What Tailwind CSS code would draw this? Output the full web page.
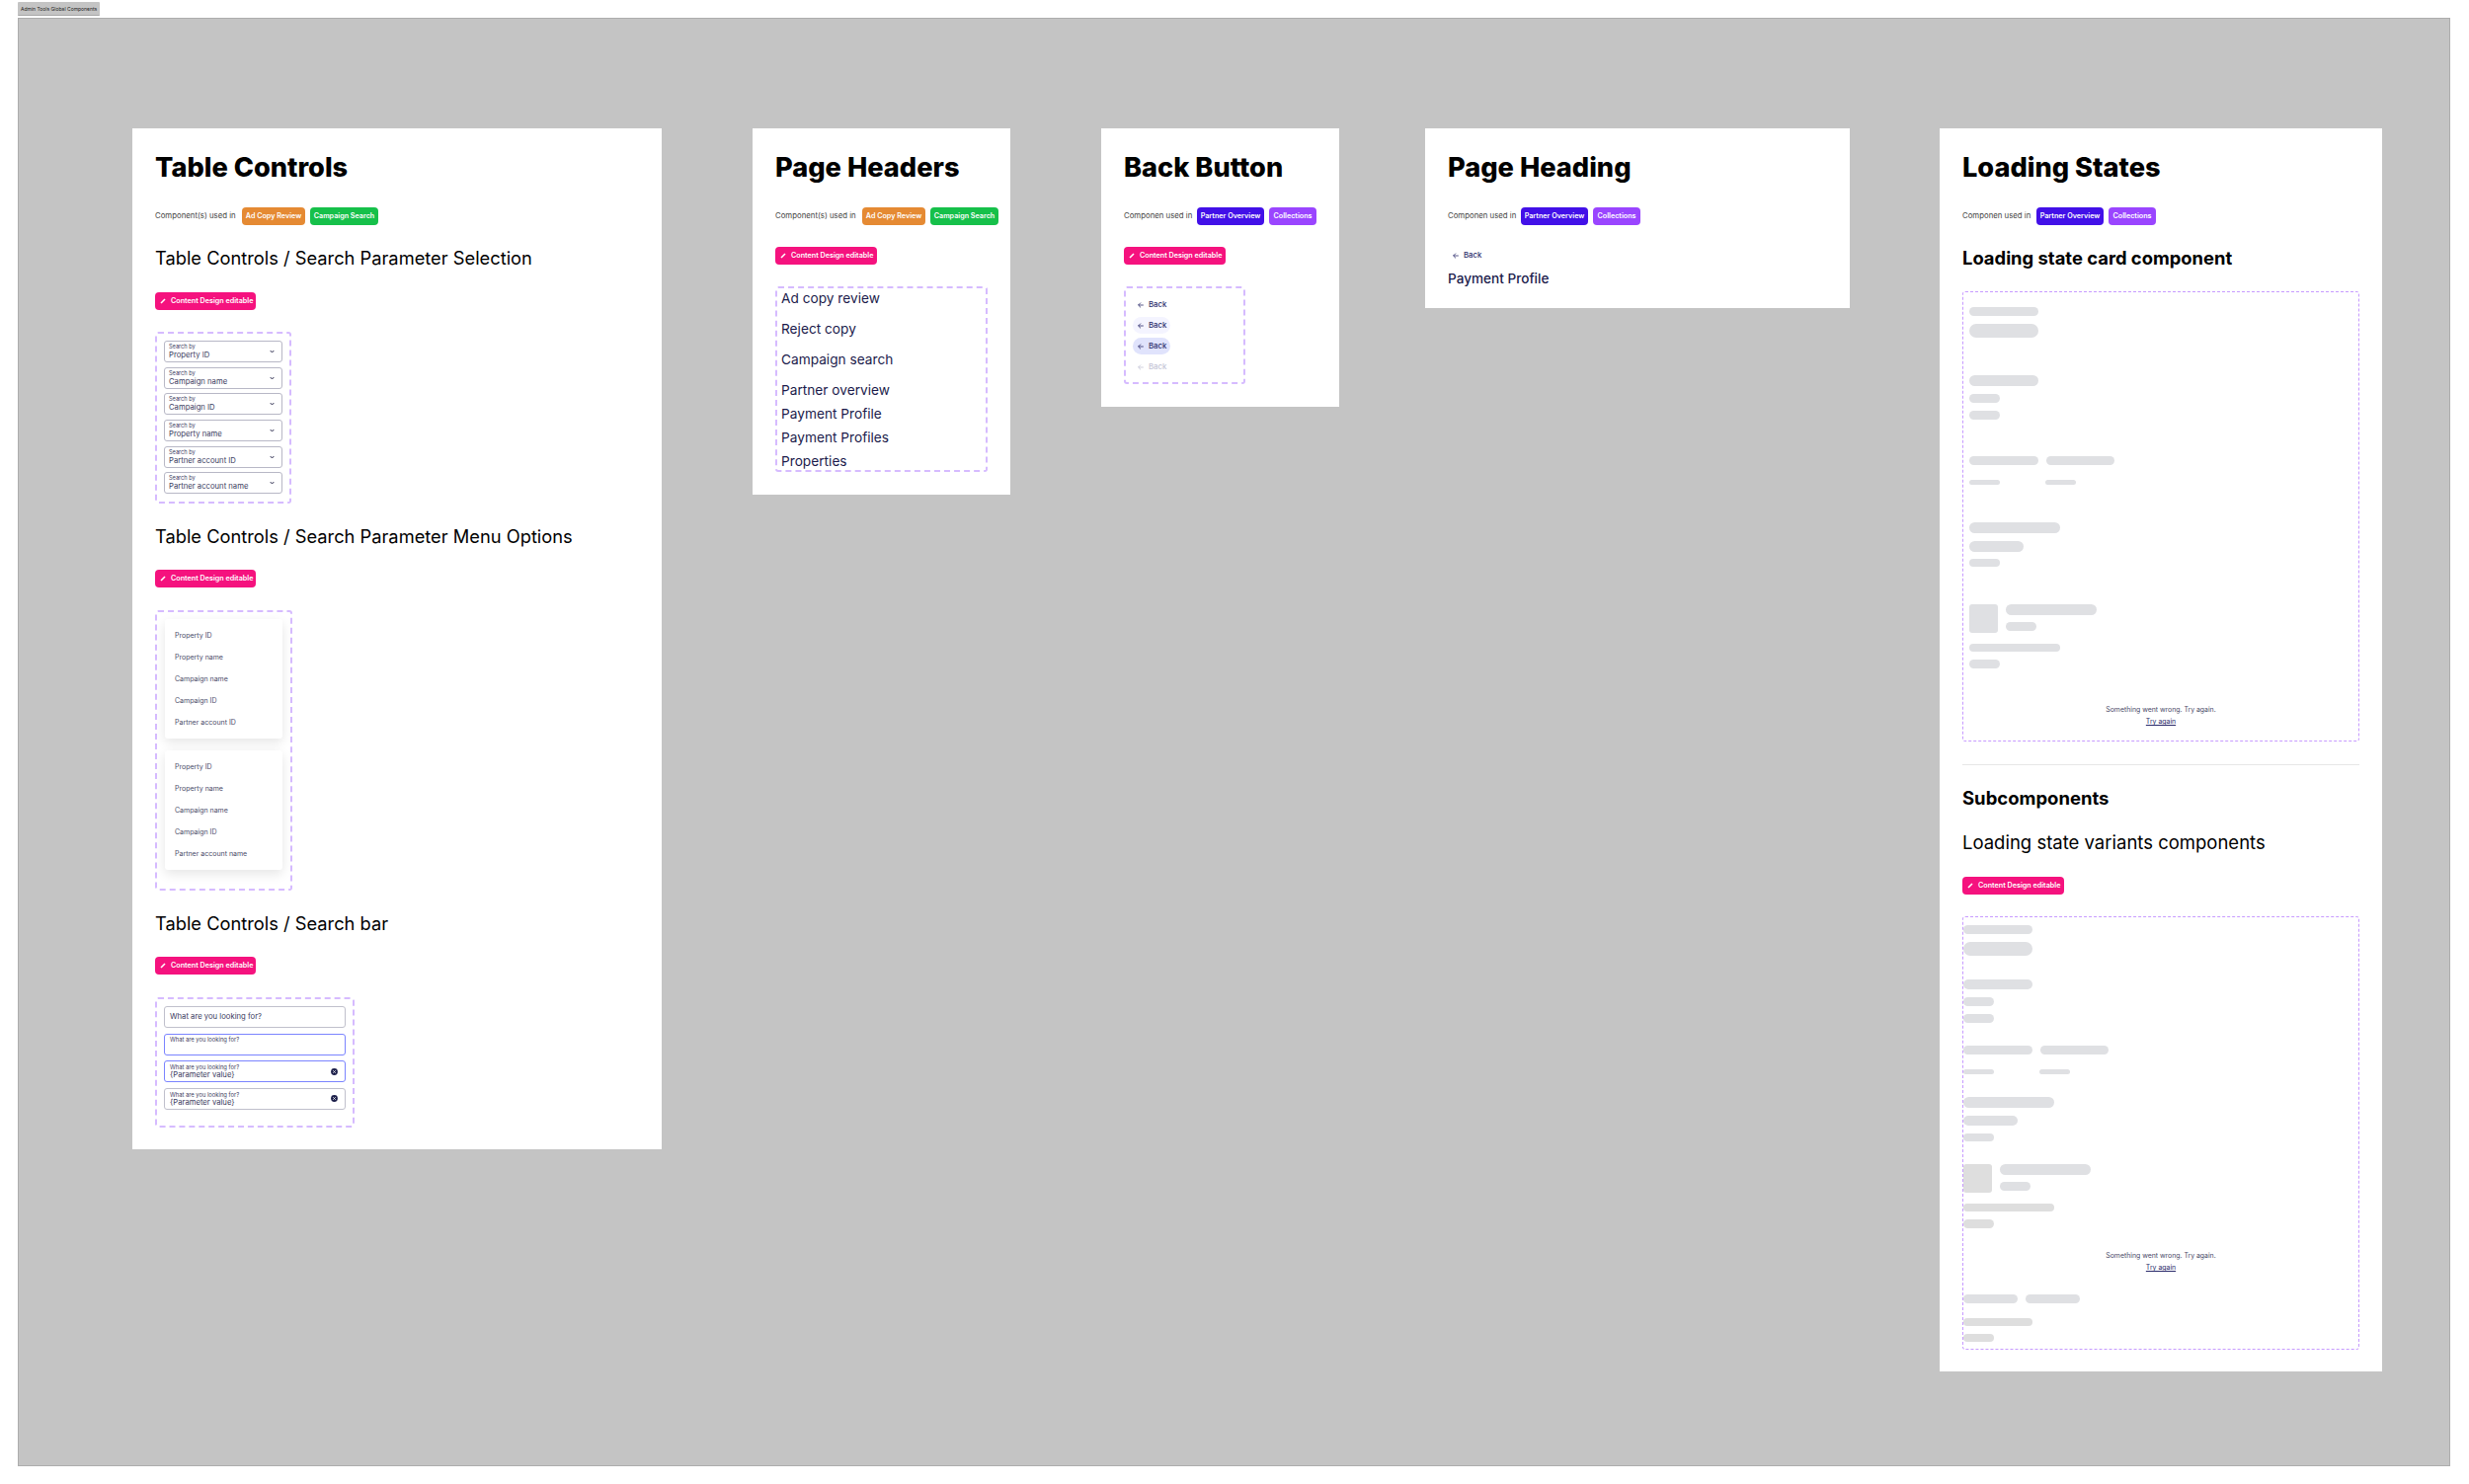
<!doctype html>
<html>
<head>
<meta charset="utf-8">
<script src="https://cdn.jsdelivr.net/npm/@tailwindcss/browser@4"></script>
</head>
<body class="bg-white font-['Inter',sans-serif]">
<div class="w-[2500px] h-[1503px] relative overflow-hidden">
  <div class="h-[18px] pl-[18px] pt-[2px]"><div class="w-[83px] h-[14px] bg-[#c4c4c4] border-b border-[#a8a8a8] rounded-[1px] text-[5px] leading-[14px] pl-[3px] text-[#222] whitespace-nowrap">Admin Tools Global Components</div></div>
  <div class="ml-[18px] w-[2463px] h-[1467px] bg-[#c4c4c4] border border-[#adadad] pt-[111px] pl-[115px] flex items-start">

    <!-- Table Controls -->
    <section class="w-[536px] h-[1034px] bg-white shrink-0 pt-5 px-[23px] flex flex-col items-start">
      <h1 class="h-10 leading-10 text-[27.2px] font-extrabold text-black whitespace-nowrap">Table Controls</h1>
      <div class="mt-5 h-[18px] flex items-center text-[7.2px] font-semibold text-white">
        <span class="w-[88px] text-[7.8px] font-normal text-[#444] whitespace-nowrap">Component(s) used in</span>
        <span class="w-[64px] h-[18px] rounded bg-[#e58a33] flex items-center justify-center whitespace-nowrap">Ad Copy Review</span>
        <span class="ml-[5px] w-[69px] h-[18px] rounded bg-[#16c04a] flex items-center justify-center whitespace-nowrap">Campaign Search</span>
      </div>
      <h2 class="mt-[22px] h-6 leading-[23px] text-[18.3px] font-normal text-black whitespace-nowrap">Table Controls / Search Parameter Selection</h2>
      <span class="mt-[22px] w-[102px] h-[18px] rounded bg-[#f5127e] flex items-center pl-[5px] gap-[5px] text-[7.2px] font-semibold text-white whitespace-nowrap"><svg class="w-[6px] h-[6px]" viewBox="0 0 6 6"><path d="M1 5 L5 1" stroke="white" stroke-width="1.6"/></svg>Content Design editable</span>
      <div class="mt-[22px] w-[138px] h-[174px] border-2 border-dashed border-[#d6bbff] rounded-[3px] pt-[7px] pl-[7px] flex flex-col gap-[4.7px]">
        <div class="w-[120px] h-[22px] shrink-0 rounded-[3px] border border-[#b8b8c6] flex items-center justify-between pl-[4px] pr-[7px]"><div class="text-[#3b3b5e] whitespace-nowrap"><p class="text-[5.6px] leading-[7px]">Search by</p><p class="text-[7.7px] leading-[9px]">Property ID</p></div><svg class="w-[5px] h-[4px]" viewBox="0 0 5 4"><path d="M.7 1 L2.5 3 L4.3 1" fill="none" stroke="#333355" stroke-width="1"/></svg></div>
        <div class="w-[120px] h-[22px] shrink-0 rounded-[3px] border border-[#b8b8c6] flex items-center justify-between pl-[4px] pr-[7px]"><div class="text-[#3b3b5e] whitespace-nowrap"><p class="text-[5.6px] leading-[7px]">Search by</p><p class="text-[7.7px] leading-[9px]">Campaign name</p></div><svg class="w-[5px] h-[4px]" viewBox="0 0 5 4"><path d="M.7 1 L2.5 3 L4.3 1" fill="none" stroke="#333355" stroke-width="1"/></svg></div>
        <div class="w-[120px] h-[22px] shrink-0 rounded-[3px] border border-[#b8b8c6] flex items-center justify-between pl-[4px] pr-[7px]"><div class="text-[#3b3b5e] whitespace-nowrap"><p class="text-[5.6px] leading-[7px]">Search by</p><p class="text-[7.7px] leading-[9px]">Campaign ID</p></div><svg class="w-[5px] h-[4px]" viewBox="0 0 5 4"><path d="M.7 1 L2.5 3 L4.3 1" fill="none" stroke="#333355" stroke-width="1"/></svg></div>
        <div class="w-[120px] h-[22px] shrink-0 rounded-[3px] border border-[#b8b8c6] flex items-center justify-between pl-[4px] pr-[7px]"><div class="text-[#3b3b5e] whitespace-nowrap"><p class="text-[5.6px] leading-[7px]">Search by</p><p class="text-[7.7px] leading-[9px]">Property name</p></div><svg class="w-[5px] h-[4px]" viewBox="0 0 5 4"><path d="M.7 1 L2.5 3 L4.3 1" fill="none" stroke="#333355" stroke-width="1"/></svg></div>
        <div class="w-[120px] h-[22px] shrink-0 rounded-[3px] border border-[#b8b8c6] flex items-center justify-between pl-[4px] pr-[7px]"><div class="text-[#3b3b5e] whitespace-nowrap"><p class="text-[5.6px] leading-[7px]">Search by</p><p class="text-[7.7px] leading-[9px]">Partner account ID</p></div><svg class="w-[5px] h-[4px]" viewBox="0 0 5 4"><path d="M.7 1 L2.5 3 L4.3 1" fill="none" stroke="#333355" stroke-width="1"/></svg></div>
        <div class="w-[120px] h-[22px] shrink-0 rounded-[3px] border border-[#b8b8c6] flex items-center justify-between pl-[4px] pr-[7px]"><div class="text-[#3b3b5e] whitespace-nowrap"><p class="text-[5.6px] leading-[7px]">Search by</p><p class="text-[7.7px] leading-[9px]">Partner account name</p></div><svg class="w-[5px] h-[4px]" viewBox="0 0 5 4"><path d="M.7 1 L2.5 3 L4.3 1" fill="none" stroke="#333355" stroke-width="1"/></svg></div>
      </div>
      <h2 class="mt-[22px] h-6 leading-[23px] text-[18.3px] font-normal text-black whitespace-nowrap">Table Controls / Search Parameter Menu Options</h2>
      <span class="mt-[21px] w-[102px] h-[18px] rounded bg-[#f5127e] flex items-center pl-[5px] gap-[5px] text-[7.2px] font-semibold text-white whitespace-nowrap"><svg class="w-[6px] h-[6px]" viewBox="0 0 6 6"><path d="M1 5 L5 1" stroke="white" stroke-width="1.6"/></svg>Content Design editable</span>
      <div class="mt-[23px] w-[139px] h-[284px] border-2 border-dashed border-[#d6bbff] rounded-[3px] pt-[7px] pl-[8px] flex flex-col gap-3">
        <div class="w-[119px] h-[121px] shrink-0 bg-white rounded-[3px] shadow-[0_4px_12px_rgba(0,0,0,0.10)] pt-[6px] pl-[10px] text-[7px] leading-[22px] text-[#4a4a68] whitespace-nowrap"><p>Property ID</p><p>Property name</p><p>Campaign name</p><p>Campaign ID</p><p>Partner account ID</p></div>
        <div class="w-[119px] h-[121px] shrink-0 bg-white rounded-[3px] shadow-[0_4px_12px_rgba(0,0,0,0.10)] pt-[6px] pl-[10px] text-[7px] leading-[22px] text-[#4a4a68] whitespace-nowrap"><p>Property ID</p><p>Property name</p><p>Campaign name</p><p>Campaign ID</p><p>Partner account name</p></div>
      </div>
      <h2 class="mt-[22px] h-6 leading-[23px] text-[18.3px] font-normal text-black whitespace-nowrap">Table Controls / Search bar</h2>
      <span class="mt-[21px] w-[102px] h-[18px] rounded bg-[#f5127e] flex items-center pl-[5px] gap-[5px] text-[7.2px] font-semibold text-white whitespace-nowrap"><svg class="w-[6px] h-[6px]" viewBox="0 0 6 6"><path d="M1 5 L5 1" stroke="white" stroke-width="1.6"/></svg>Content Design editable</span>
      <div class="mt-[23px] w-[202px] h-[132px] border-2 border-dashed border-[#d6bbff] rounded-[3px] pt-[7px] pl-[7px] flex flex-col gap-[5.5px]">
        <div class="w-[184px] h-[22px] shrink-0 rounded-[3px] border border-[#c0c0cc] flex items-center pl-[5px] text-[7.7px] text-[#3b3b5e]">What are you looking for?</div>
        <div class="w-[184px] h-[22px] shrink-0 rounded-[3px] border border-[#7b84ff] pl-[5px] pt-[1px] text-[5.8px] leading-[7px] text-[#3b3b5e]">What are you looking for?</div>
        <div class="w-[184px] h-[22px] shrink-0 rounded-[3px] border border-[#7b84ff] flex items-center justify-between pl-[5px] pr-[7px] text-[#3b3b5e]"><div class="whitespace-nowrap"><p class="text-[5.8px] leading-[7px]">What are you looking for?</p><p class="text-[7.7px] leading-[9px]">{Parameter value}</p></div><svg class="w-[7px] h-[7px]" viewBox="0 0 7 7"><circle cx="3.5" cy="3.5" r="3.4" fill="#1c1f4a"/><path d="M2.2 2.2 L4.8 4.8 M4.8 2.2 L2.2 4.8" stroke="white" stroke-width=".8"/></svg></div>
        <div class="w-[184px] h-[22px] shrink-0 rounded-[3px] border border-[#c0c0cc] flex items-center justify-between pl-[5px] pr-[7px] text-[#3b3b5e]"><div class="whitespace-nowrap"><p class="text-[5.8px] leading-[7px]">What are you looking for?</p><p class="text-[7.7px] leading-[9px]">{Parameter value}</p></div><svg class="w-[7px] h-[7px]" viewBox="0 0 7 7"><circle cx="3.5" cy="3.5" r="3.4" fill="#1c1f4a"/><path d="M2.2 2.2 L4.8 4.8 M4.8 2.2 L2.2 4.8" stroke="white" stroke-width=".8"/></svg></div>
      </div>
    </section>

    <!-- Page Headers -->
    <section class="ml-[92px] w-[261px] h-[371px] bg-white shrink-0 pt-5 px-[23px] flex flex-col items-start">
      <h1 class="h-10 leading-10 text-[27.2px] font-extrabold text-black whitespace-nowrap">Page Headers</h1>
      <div class="mt-5 h-[18px] flex items-center text-[7.2px] font-semibold text-white">
        <span class="w-[88px] text-[7.8px] font-normal text-[#444] whitespace-nowrap">Component(s) used in</span>
        <span class="w-[64px] h-[18px] rounded bg-[#e58a33] flex items-center justify-center whitespace-nowrap">Ad Copy Review</span>
        <span class="ml-[5px] w-[69px] h-[18px] rounded bg-[#16c04a] flex items-center justify-center whitespace-nowrap">Campaign Search</span>
      </div>
      <span class="mt-[22px] w-[103px] h-[18px] rounded bg-[#f5127e] flex items-center pl-[5px] gap-[5px] text-[7.2px] font-semibold text-white whitespace-nowrap"><svg class="w-[6px] h-[6px]" viewBox="0 0 6 6"><path d="M1 5 L5 1" stroke="white" stroke-width="1.6"/></svg>Content Design editable</span>
      <div class="mt-[22px] w-[215px] h-[188px] border-2 border-dashed border-[#d6bbff] rounded-[3px] pl-[4px] text-[13.7px] text-[#1b1b4b] whitespace-nowrap">
        <p class="h-[20px] leading-[20px] mt-[0px]">Ad copy review</p>
        <p class="h-[20px] leading-[20px] mt-[11px]">Reject copy</p>
        <p class="h-[20px] leading-[20px] mt-[11px]">Campaign search</p>
        <p class="h-[20px] leading-[20px] mt-[11px]">Partner overview</p>
        <p class="h-[20px] leading-[20px] mt-[4px]">Payment Profile</p>
        <p class="h-[20px] leading-[20px] mt-[4px]">Payment Profiles</p>
        <p class="h-[20px] leading-[20px] mt-[4px]">Properties</p>
      </div>
    </section>

    <!-- Back Button -->
    <section class="ml-[92px] w-[241px] h-[282px] bg-white shrink-0 pt-5 px-[23px] flex flex-col items-start">
      <h1 class="h-10 leading-10 text-[27.2px] font-extrabold text-black whitespace-nowrap">Back Button</h1>
      <div class="mt-5 h-[18px] flex items-center text-[7.2px] font-semibold text-white">
        <span class="w-[74px] text-[7.8px] font-normal text-[#444] whitespace-nowrap">Componen used in</span>
        <span class="w-[68px] h-[18px] rounded bg-[#4210e8] flex items-center justify-center whitespace-nowrap">Partner Overview</span>
        <span class="ml-[5px] w-[48px] h-[18px] rounded bg-[#9a45ff] flex items-center justify-center">Collections</span>
      </div>
      <span class="mt-[22px] w-[103px] h-[18px] rounded bg-[#f5127e] flex items-center pl-[5px] gap-[5px] text-[7.2px] font-semibold text-white whitespace-nowrap"><svg class="w-[6px] h-[6px]" viewBox="0 0 6 6"><path d="M1 5 L5 1" stroke="white" stroke-width="1.6"/></svg>Content Design editable</span>
      <div class="mt-[22px] w-[123px] h-[99px] border-2 border-dashed border-[#d6bbff] rounded-[3px] pt-[8px] pl-[7px] flex flex-col gap-1 text-[7.8px] font-medium">
        <div class="w-[38px] h-[17px] rounded-full flex items-center pl-[5px] gap-[5px] text-[#2b2b6b]"><svg class="w-[6px] h-[6px]" viewBox="0 0 6 6"><path d="M5.8 3 H.6 M3 .6 L.6 3 L3 5.4" fill="none" stroke="#2b2b6b" stroke-width=".8"/></svg>Back</div>
        <div class="w-[38px] h-[17px] rounded-full bg-[#f4f4ff] flex items-center pl-[5px] gap-[5px] text-[#2b2b6b]"><svg class="w-[6px] h-[6px]" viewBox="0 0 6 6"><path d="M5.8 3 H.6 M3 .6 L.6 3 L3 5.4" fill="none" stroke="#2b2b6b" stroke-width=".8"/></svg>Back</div>
        <div class="w-[38px] h-[17px] rounded-full bg-[#e0e3fc] flex items-center pl-[5px] gap-[5px] text-[#2b2b6b]"><svg class="w-[6px] h-[6px]" viewBox="0 0 6 6"><path d="M5.8 3 H.6 M3 .6 L.6 3 L3 5.4" fill="none" stroke="#2b2b6b" stroke-width=".8"/></svg>Back</div>
        <div class="w-[38px] h-[17px] rounded-full flex items-center pl-[5px] gap-[5px] text-[#c4c4d6]"><svg class="w-[6px] h-[6px]" viewBox="0 0 6 6"><path d="M5.8 3 H.6 M3 .6 L.6 3 L3 5.4" fill="none" stroke="#c4c4d6" stroke-width=".8"/></svg>Back</div>
      </div>
    </section>

    <!-- Page Heading -->
    <section class="ml-[87px] w-[430px] h-[182px] bg-white shrink-0 pt-5 px-[23px] flex flex-col items-start">
      <h1 class="h-10 leading-10 text-[27.2px] font-extrabold text-black whitespace-nowrap">Page Heading</h1>
      <div class="mt-5 h-[18px] flex items-center text-[7.2px] font-semibold text-white">
        <span class="w-[74px] text-[7.8px] font-normal text-[#444] whitespace-nowrap">Componen used in</span>
        <span class="w-[68px] h-[18px] rounded bg-[#4210e8] flex items-center justify-center whitespace-nowrap">Partner Overview</span>
        <span class="ml-[5px] w-[48px] h-[18px] rounded bg-[#9a45ff] flex items-center justify-center">Collections</span>
      </div>
      <div class="mt-[22px] h-[17px] flex items-center pl-[5px] gap-[5px] text-[7.8px] font-medium text-[#2b2b6b]"><svg class="w-[6px] h-[6px]" viewBox="0 0 6 6"><path d="M5.8 3 H.6 M3 .6 L.6 3 L3 5.4" fill="none" stroke="#2b2b6b" stroke-width=".8"/></svg>Back</div>
      <p class="mt-[5px] h-[20px] leading-[20px] text-[13.6px] font-medium text-[#1b1b4b]">Payment Profile</p>
    </section>

    <!-- Loading States -->
    <section class="ml-[91px] w-[448px] h-[1259px] bg-white shrink-0 pt-5 px-[23px] flex flex-col items-start">
      <h1 class="h-10 leading-10 text-[27.2px] font-extrabold text-black whitespace-nowrap">Loading States</h1>
      <div class="mt-5 h-[18px] flex items-center text-[7.2px] font-semibold text-white">
        <span class="w-[75px] text-[7.8px] font-normal text-[#444] whitespace-nowrap">Componen used in</span>
        <span class="w-[68px] h-[18px] rounded bg-[#4210e8] flex items-center justify-center whitespace-nowrap">Partner Overview</span>
        <span class="ml-[5px] w-[48px] h-[18px] rounded bg-[#9a45ff] flex items-center justify-center">Collections</span>
      </div>
      <h3 class="mt-[22px] h-6 leading-[23px] text-[18.4px] font-bold text-black whitespace-nowrap">Loading state card component</h3>
      <div class="mt-[21px] w-[402px] h-[456px] border border-dashed border-[#c79bff] rounded-[3px] pl-[6px] flex flex-col items-start">
        <div class="mt-[15px] w-[70px] h-[9px] rounded-full bg-[#dfe0e3]"></div>
        <div class="mt-[8px] w-[70px] h-[14px] rounded-full bg-[#dfe0e3]"></div>
        <div class="mt-[38px] w-[70px] h-[11px] rounded-full bg-[#dfe0e3]"></div>
        <div class="mt-[8px] w-[31px] h-[9px] rounded-full bg-[#dfe0e3]"></div>
        <div class="mt-[8px] w-[31px] h-[9px] rounded-full bg-[#dfe0e3]"></div>
        <div class="mt-[37px] flex gap-2"><div class="w-[70px] h-[9px] rounded-full bg-[#dfe0e3]"></div><div class="w-[69px] h-[9px] rounded-full bg-[#dfe0e3]"></div></div>
        <div class="mt-[15px] flex gap-[46px]"><div class="w-[31px] h-[5px] rounded-full bg-[#dfe0e3]"></div><div class="w-[31px] h-[5px] rounded-full bg-[#dfe0e3]"></div></div>
        <div class="mt-[38px] w-[92px] h-[11px] rounded-full bg-[#dfe0e3]"></div>
        <div class="mt-[8px] w-[55px] h-[11px] rounded-full bg-[#dfe0e3]"></div>
        <div class="mt-[7px] w-[31px] h-[8px] rounded-full bg-[#dfe0e3]"></div>
        <div class="mt-[38px] flex gap-2"><div class="w-[29px] h-[29px] rounded-[3px] bg-[#dfe0e3]"></div><div><div class="w-[92px] h-[11px] rounded-full bg-[#dfe0e3]"></div><div class="mt-[7px] w-[31px] h-[9px] rounded-full bg-[#dfe0e3]"></div></div></div>
        <div class="mt-[11px] w-[92px] h-[8px] rounded-full bg-[#dfe0e3]"></div>
        <div class="mt-[8px] w-[31px] h-[9px] rounded-full bg-[#dfe0e3]"></div>
        <div class="mt-[36px] w-[388px] text-center text-[#4a4a68] text-[6.9px] leading-[12px]"><p>Something went wrong. Try again.</p><p class="underline text-[#2b2b6b]">Try again</p></div>
      </div>
      <div class="mt-[23px] w-[402px] h-px bg-[#e6e6e6]"></div>
      <h3 class="mt-[22px] h-6 leading-[23px] text-[18.5px] font-bold text-black whitespace-nowrap">Subcomponents</h3>
      <h2 class="mt-[21px] h-6 leading-[23px] text-[18.5px] font-normal text-black whitespace-nowrap">Loading state variants components</h2>
      <span class="mt-[22px] w-[103px] h-[18px] rounded bg-[#f5127e] flex items-center pl-[5px] gap-[5px] text-[7.2px] font-semibold text-white whitespace-nowrap"><svg class="w-[6px] h-[6px]" viewBox="0 0 6 6"><path d="M1 5 L5 1" stroke="white" stroke-width="1.6"/></svg>Content Design editable</span>
      <div class="mt-[22px] w-[402px] h-[439px] border border-dashed border-[#c79bff] rounded-[3px] flex flex-col items-start">
        <div class="mt-[8px] w-[70px] h-[9px] rounded-full bg-[#dfe0e3]"></div>
        <div class="mt-[8px] w-[70px] h-[14px] rounded-full bg-[#dfe0e3]"></div>
        <div class="mt-[24px] w-[70px] h-[10px] rounded-full bg-[#dfe0e3]"></div>
        <div class="mt-[8px] w-[31px] h-[9px] rounded-full bg-[#dfe0e3]"></div>
        <div class="mt-[8px] w-[31px] h-[9px] rounded-full bg-[#dfe0e3]"></div>
        <div class="mt-[23px] flex gap-2"><div class="w-[70px] h-[9px] rounded-full bg-[#dfe0e3]"></div><div class="w-[69px] h-[9px] rounded-full bg-[#dfe0e3]"></div></div>
        <div class="mt-[15px] flex gap-[46px]"><div class="w-[31px] h-[5px] rounded-full bg-[#dfe0e3]"></div><div class="w-[31px] h-[5px] rounded-full bg-[#dfe0e3]"></div></div>
        <div class="mt-[23px] w-[92px] h-[11px] rounded-full bg-[#dfe0e3]"></div>
        <div class="mt-[8px] w-[55px] h-[10px] rounded-full bg-[#dfe0e3]"></div>
        <div class="mt-[8px] w-[31px] h-[8px] rounded-full bg-[#dfe0e3]"></div>
        <div class="mt-[23px] flex gap-2"><div class="w-[29px] h-[29px] rounded-[3px] bg-[#dedede]"></div><div><div class="w-[92px] h-[11px] rounded-full bg-[#dfe0e3]"></div><div class="mt-[7px] w-[31px] h-[9px] rounded-full bg-[#dfe0e3]"></div></div></div>
        <div class="mt-[11px] w-[92px] h-[8px] rounded-full bg-[#dedede]"></div>
        <div class="mt-[8px] w-[31px] h-[9px] rounded-full bg-[#dedede]"></div>
        <div class="mt-[22px] w-[400px] text-center text-[#4a4a68] text-[6.9px] leading-[12px]"><p>Something went wrong. Try again.</p><p class="underline text-[#2b2b6b]">Try again</p></div>
        <div class="mt-[21px] flex gap-2"><div class="w-[55px] h-[9px] rounded-full bg-[#dfe0e3]"></div><div class="w-[55px] h-[9px] rounded-full bg-[#dfe0e3]"></div></div>
        <div class="mt-[15px] w-[70px] h-[8px] rounded-full bg-[#dedede]"></div>
        <div class="mt-[8px] w-[31px] h-[8px] rounded-full bg-[#dedede]"></div>
      </div>
    </section>
  </div>
</div>
</body>
</html>
